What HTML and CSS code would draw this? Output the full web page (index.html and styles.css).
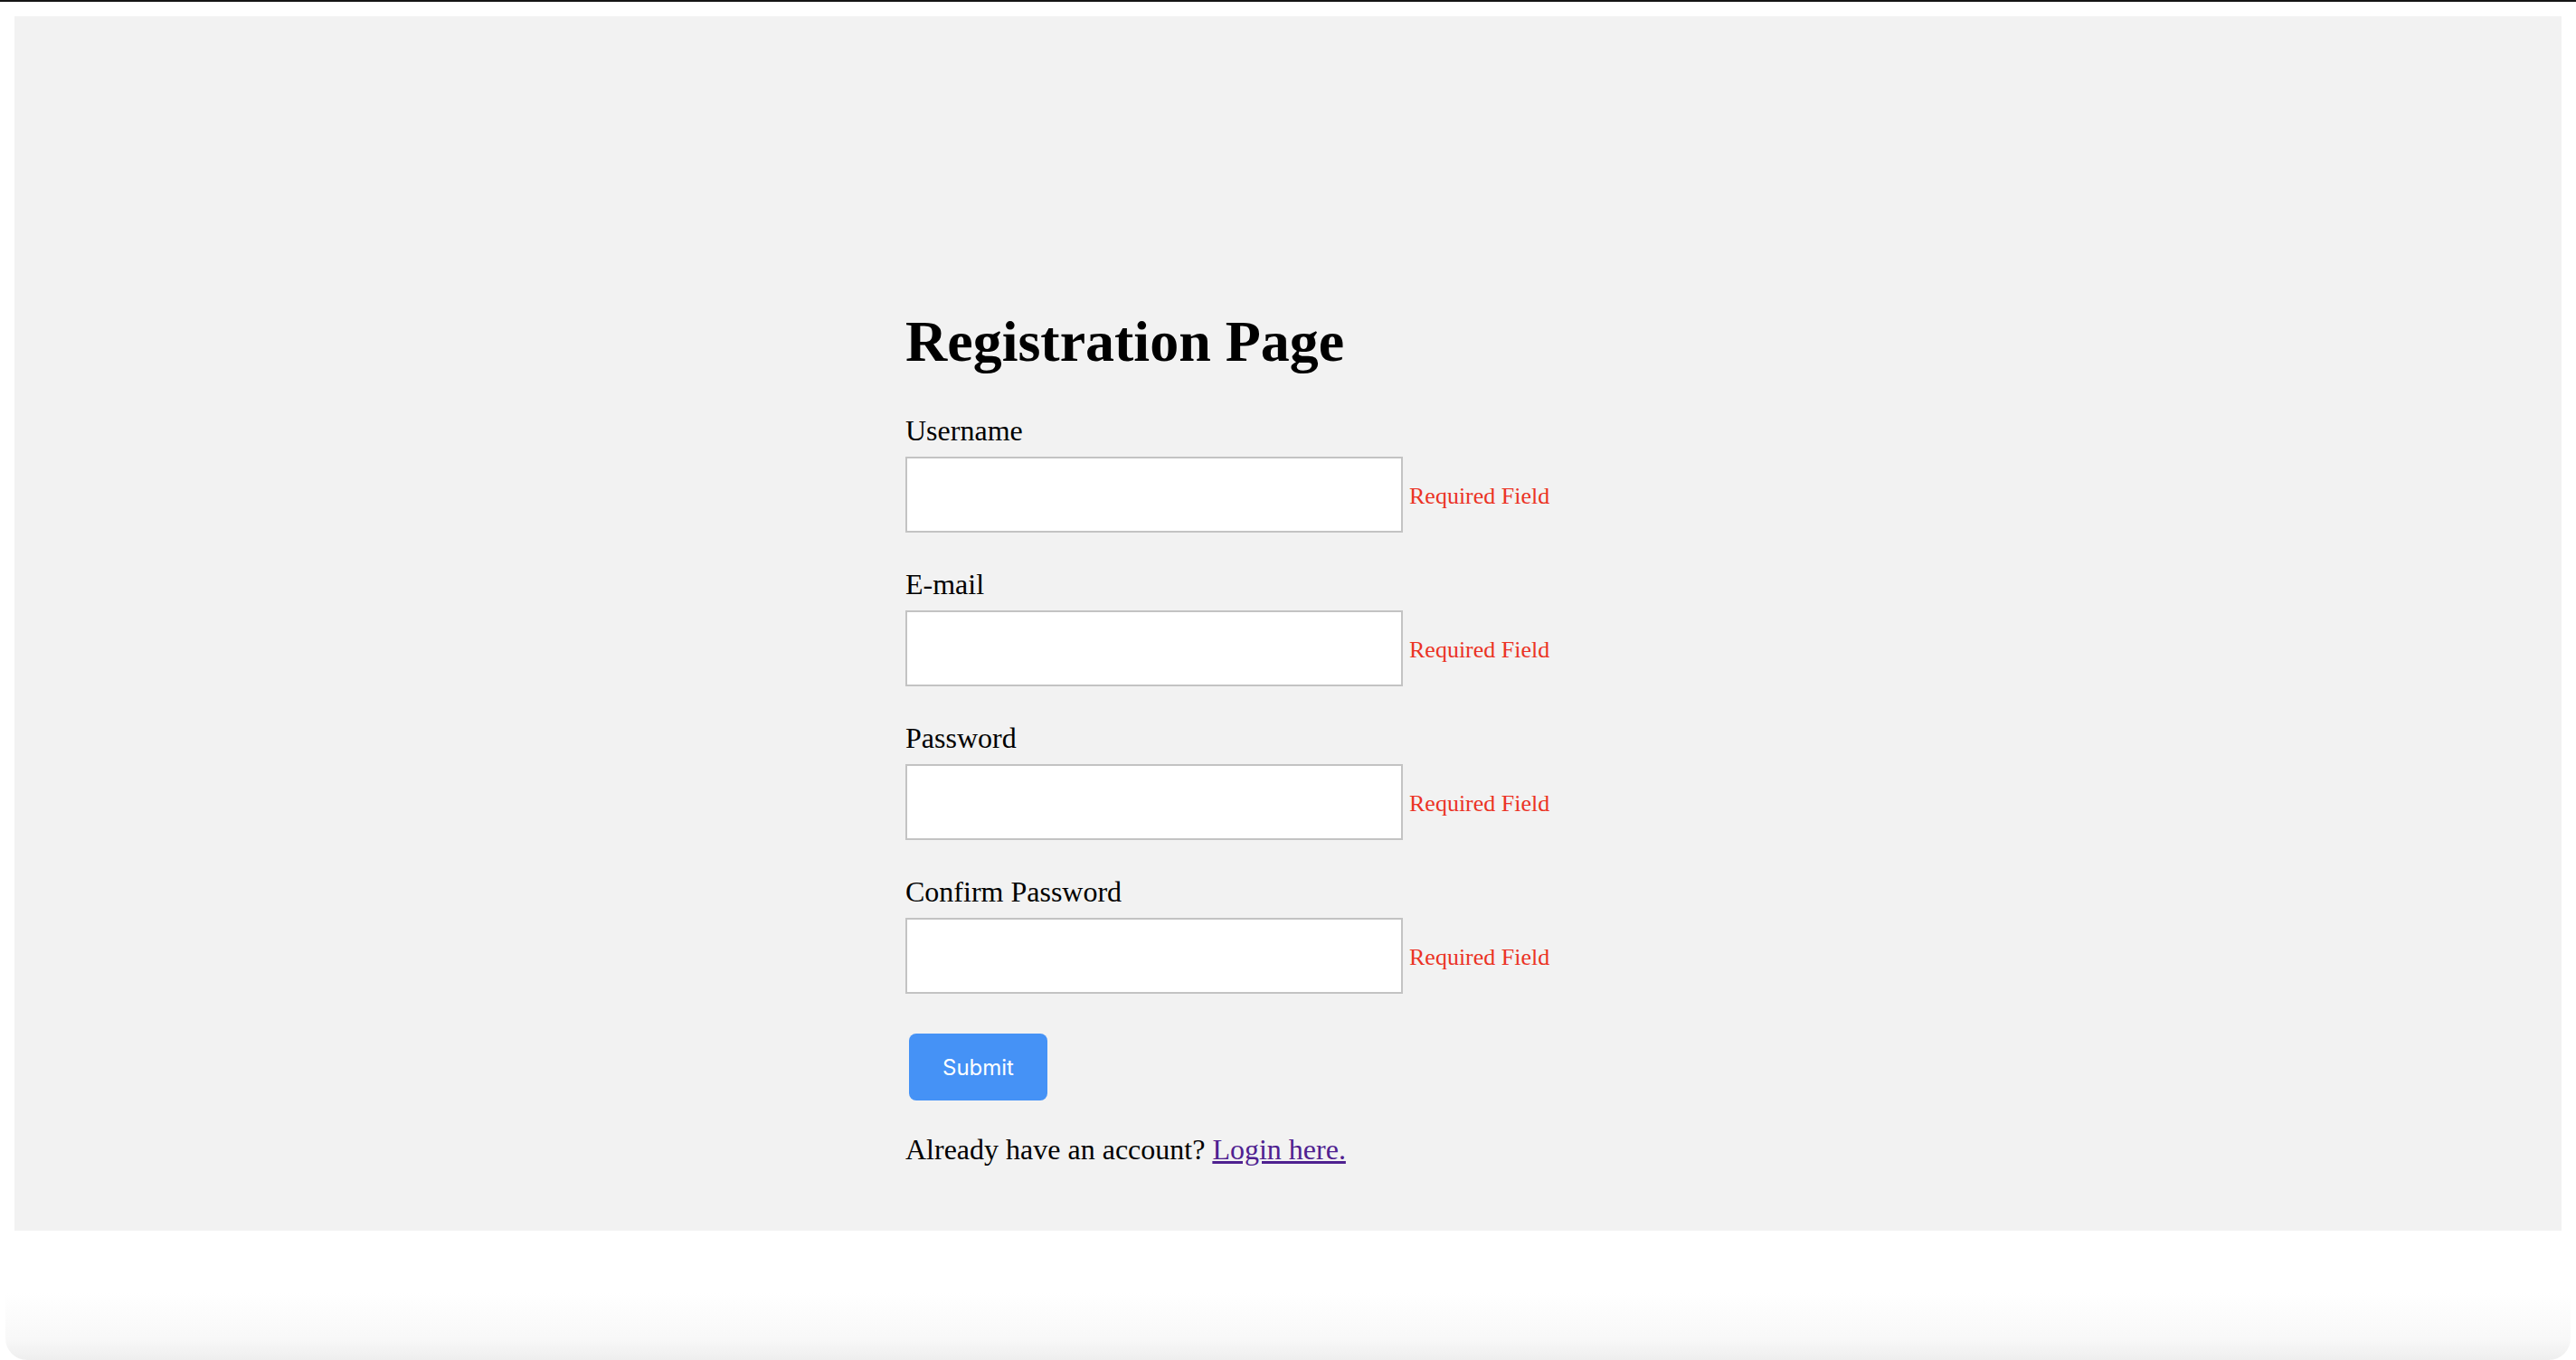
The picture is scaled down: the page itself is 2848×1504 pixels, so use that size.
FILE: index.html
```
<!DOCTYPE html>
<html lang="en">
<head>
<meta charset="utf-8">
<title>Registration Page</title>
<link rel="stylesheet" href="styles.css">
</head>
<body>
<div class="topbar"></div>
<div class="page">
  <main class="panel">
    <form class="form-wrap">
      <h1 class="title">Registration Page</h1>
      <div class="field">
        <label class="label" for="username">Username</label>
        <div class="row">
          <input class="input" id="username" type="text">
          <span class="error">Required Field</span>
        </div>
      </div>
      <div class="field">
        <label class="label" for="email">E-mail</label>
        <div class="row">
          <input class="input" id="email" type="text">
          <span class="error">Required Field</span>
        </div>
      </div>
      <div class="field">
        <label class="label" for="password">Password</label>
        <div class="row">
          <input class="input" id="password" type="password">
          <span class="error">Required Field</span>
        </div>
      </div>
      <div class="field">
        <label class="label" for="confirm">Confirm Password</label>
        <div class="row">
          <input class="input" id="confirm" type="password">
          <span class="error">Required Field</span>
        </div>
      </div>
      <button class="submit" type="button">Submit</button>
      <p class="account">Already have an account? <a class="login" href="#">Login here.</a></p>
    </form>
  </main>
</div>
<div class="bottom-shade"></div>
</body>
</html>
```
FILE: styles.css
```
html, body {
  margin: 0;
  padding: 0;
  background: #ffffff;
}
body {
  width: 2848px;
  height: 1504px;
  overflow: hidden;
  font-family: "Liberation Serif", "Times New Roman", serif;
  color: #000;
}
.topbar {
  height: 2px;
  background: #151515;
}
.page {
  padding: 16px 16px 0 16px;
}
.panel {
  background: #f2f2f2;
  height: 1343px;
  box-sizing: border-box;
  padding-top: 323px;
}
.form-wrap {
  width: 846px;
  margin: 0 auto;
  display: flex;
  flex-direction: column;
  align-items: flex-start;
}
.title {
  margin: 0 0 43px 0;
  font-size: 64px;
  line-height: 74px;
  font-weight: bold;
}
.field {
  display: flex;
  flex-direction: column;
  margin-bottom: 39px;
}
.field:last-of-type {
  margin-bottom: 44px;
}
.label {
  font-size: 32px;
  line-height: 36px;
  margin-bottom: 11px;
}
.row {
  display: flex;
  align-items: center;
  gap: 7px;
}
.input {
  width: 550px;
  height: 84px;
  box-sizing: border-box;
  margin: 0;
  border: 2px solid #c3c3c3;
  background: #ffffff;
  padding: 0 12px;
  outline: none;
}
.error {
  color: #eb3325;
  font-size: 26px;
  line-height: 30px;
  margin-top: 4px;
}
.submit {
  margin: 0 0 36px 4px;
  width: 153px;
  height: 74px;
  border: none;
  border-radius: 8px;
  background: #4592f6;
  color: #ffffff;
  font-family: Inter, "Liberation Sans", sans-serif;
  font-size: 24px;
  font-weight: 400;
  padding: 0;
}
.account {
  margin: 0;
  font-size: 32px;
  line-height: 36px;
}
.login {
  color: #4f2190;
  text-decoration: underline;
}
.bottom-shade {
  height: 143px;
  margin: 0 6px;
  border-radius: 0 0 24px 24px;
  background: linear-gradient(to bottom, #ffffff 0px, #ffffff 69px, #f8f8f8 120px, #eeeeee 143px);
}
```
